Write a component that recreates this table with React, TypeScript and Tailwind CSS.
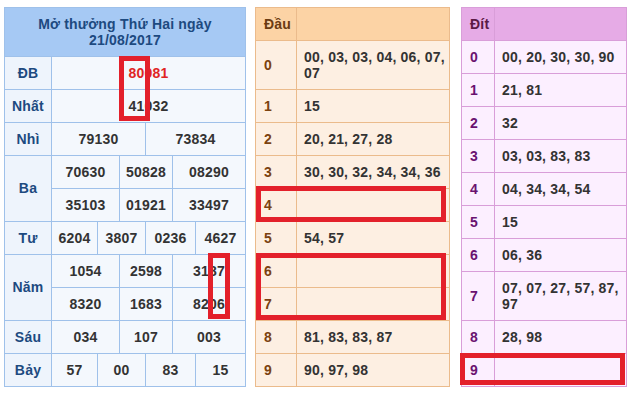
import { Fragment } from "react";

type Cell = { text: string; span: string; red?: boolean };

const prizeRows: { label: string; rowSpan?: boolean; cells: Cell[] }[] = [
  { label: "ĐB", cells: [{ text: "80081", span: "col-span-6", red: true }] },
  { label: "Nhất", cells: [{ text: "41032", span: "col-span-6" }] },
  {
    label: "Nhì",
    cells: [
      { text: "79130", span: "col-span-3" },
      { text: "73834", span: "col-span-3" },
    ],
  },
  {
    label: "Ba",
    rowSpan: true,
    cells: [
      { text: "70630", span: "col-span-2" },
      { text: "50828", span: "col-span-2" },
      { text: "08290", span: "col-span-2" },
      { text: "35103", span: "col-span-2" },
      { text: "01921", span: "col-span-2" },
      { text: "33497", span: "col-span-2" },
    ],
  },
  {
    label: "Tư",
    cells: [
      { text: "6204", span: "col-span-1" },
      { text: "3807", span: "col-span-2" },
      { text: "0236", span: "col-span-2" },
      { text: "4627", span: "col-span-1" },
    ],
  },
  {
    label: "Năm",
    rowSpan: true,
    cells: [
      { text: "1054", span: "col-span-2" },
      { text: "2598", span: "col-span-2" },
      { text: "3187", span: "col-span-2" },
      { text: "8320", span: "col-span-2" },
      { text: "1683", span: "col-span-2" },
      { text: "8206", span: "col-span-2" },
    ],
  },
  {
    label: "Sáu",
    cells: [
      { text: "034", span: "col-span-2" },
      { text: "107", span: "col-span-2" },
      { text: "003", span: "col-span-2" },
    ],
  },
  {
    label: "Bảy",
    cells: [
      { text: "57", span: "col-span-1" },
      { text: "00", span: "col-span-2" },
      { text: "83", span: "col-span-2" },
      { text: "15", span: "col-span-1" },
    ],
  },
];

const dau = [
  "00, 03, 03, 04, 06, 07, 07",
  "15",
  "20, 21, 27, 28",
  "30, 30, 32, 34, 34, 36",
  "",
  "54, 57",
  "",
  "",
  "81, 83, 83, 87",
  "90, 97, 98",
];

const dit = [
  "00, 20, 30, 30, 90",
  "21, 81",
  "32",
  "03, 03, 83, 83",
  "04, 34, 34, 54",
  "15",
  "06, 36",
  "07, 07, 27, 57, 87, 97",
  "28, 98",
  "",
];

export default function App() {
  return (
    <div
      className="relative h-[394px] w-[631px] overflow-hidden bg-white text-[14px] font-bold tracking-[0.2px]"
      style={{ fontFamily: '"Liberation Sans", Arial, sans-serif' }}
    >
      <div className="flex items-start pl-[4px] pt-[7px]">
        {/* kết quả */}
        <div className="grid w-fit grid-cols-[46px_45px_21px_25px_26px_22px_49px] grid-rows-[48px_repeat(10,32px)] gap-px bg-[#9fc1ea] p-px">
          <div className="col-span-7 flex flex-col items-center justify-center bg-[#a6c9f4] leading-[16px] text-[#1d4a80]">
            <span>Mở thưởng Thứ Hai ngày</span>
            <span>21/08/2017</span>
          </div>
          {prizeRows.map((r) => (
            <Fragment key={r.label}>
              <div
                className={`flex items-center justify-center bg-[#eef4fc] text-[#1d4a80] ${
                  r.rowSpan ? "row-span-2" : ""
                }`}
              >
                {r.label}
              </div>
              {r.cells.map((c, i) => (
                <div
                  key={i}
                  className={`${c.span} flex items-center justify-center bg-[#f4f8fd] ${
                    c.red ? "text-[#e02424]" : "text-[#333333]"
                  }`}
                >
                  {c.text}
                </div>
              ))}
            </Fragment>
          ))}
        </div>

        {/* đầu */}
        <div className="ml-[9px] grid w-fit grid-cols-[40px_152px] grid-rows-[32px_48px_repeat(9,32px)] gap-px bg-[#ebbb8c] p-px">
          <div className="flex items-center bg-[#fcd3a5] pl-2 text-[#6b3b12]">Đầu</div>
          <div className="bg-[#fcd3a5]" />
          {dau.map((v, i) => (
            <Fragment key={i}>
              <div className="flex items-center bg-[#fdefe2] pl-2 text-[#7b4210]">{i}</div>
              <div className="flex items-center bg-[#fdefe2] pl-[7px] pr-1 leading-[16px] text-[#333333]">
                {v}
              </div>
            </Fragment>
          ))}
        </div>

        {/* đít */}
        <div className="ml-[11px] grid w-fit grid-cols-[32px_131px] grid-rows-[repeat(8,32px)_48px_repeat(2,32px)] gap-px bg-[#d99ed9] p-px">
          <div className="flex items-center bg-[#e6abe6] pl-2 text-[#5a1a45]">Đít</div>
          <div className="bg-[#e6abe6]" />
          {dit.map((v, i) => (
            <Fragment key={i}>
              <div className="flex items-center bg-[#fcefff] pl-2 text-[#6a1270]">{i}</div>
              <div className="flex items-center bg-[#fcefff] pl-[7px] pr-1 leading-[16px] text-[#333333]">
                {v}
              </div>
            </Fragment>
          ))}
        </div>
      </div>

      {/* khung đỏ đánh dấu */}
      <div className="absolute left-[119px] top-[56px] h-[65px] w-[31px] border-[5px] border-[#e3202b]" />
      <div className="absolute left-[208px] top-[253px] h-[66px] w-[22px] border-[5px] border-[#e3202b]" />
      <div className="absolute left-[256px] top-[186px] h-[36px] w-[190px] border-[5px] border-[#e3202b]" />
      <div className="absolute left-[256px] top-[253px] h-[67px] w-[190px] border-[5px] border-[#e3202b]" />
      <div className="absolute left-[460px] top-[353px] h-[32px] w-[165px] border-[5px] border-[#e3202b]" />
    </div>
  );
}
